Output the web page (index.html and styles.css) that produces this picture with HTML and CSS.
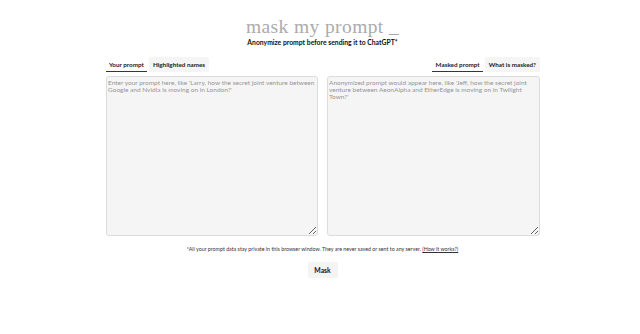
FILE: index.html
```html
<!DOCTYPE html>
<html lang="en">
<head>
<meta charset="utf-8">
<title>mask my prompt</title>
<link rel="stylesheet" href="styles.css">
</head>
<body>
<div class="page">
  <header class="head">
    <h1 class="title">mask my prompt _</h1>
    <p class="subtitle">Anonymize prompt before sending it to ChatGPT*</p>
  </header>
  <main class="panes">
    <section class="pane">
      <nav class="tabs">
        <span class="tab active">Your prompt</span>
        <span class="tab">Highlighted names</span>
      </nav>
      <textarea class="box" placeholder="Enter your prompt here, like 'Larry, how the secret joint venture between Google and Nvidia is moving on in London?'"></textarea>
    </section>
    <section class="pane">
      <nav class="tabs right">
        <span class="tab active">Masked prompt</span>
        <span class="tab">What is masked?</span>
      </nav>
      <textarea class="box" placeholder="Anonymized prompt would appear here, like 'Jeff, how the secret joint venture between AeonAlpha and EtherEdge is moving on in Twilight Town?'"></textarea>
    </section>
  </main>
  <p class="note">*All your prompt data stay private in this browser window. They are never saved or sent to any server. <a class="link" href="#">(How it works?)</a></p>
  <div class="actions"><button class="btn">Mask</button></div>
</div>
</body>
</html>
```
FILE: styles.css
```css
html, body {
  margin: 0;
  padding: 0;
  background: #fff;
}
body {
  font-family: Lato, "Open Sans", sans-serif;
  color: #222;
  padding-left: 5px;
}
.page {
  width: 434px;
  margin: 0 auto;
  display: flex;
  flex-direction: column;
}
.head {
  display: flex;
  flex-direction: column;
  align-items: center;
  padding-top: 16px;
}
.title {
  margin: 0;
  font-family: "Liberation Serif", serif;
  font-weight: 400;
  font-size: 19.5px;
  line-height: 22px;
  color: #ababab;
  letter-spacing: 0.4px;
}
.subtitle {
  margin: 0;
  font-size: 6.8px;
  font-weight: 700;
  line-height: 9px;
  color: #111;
}
.panes {
  margin-top: 10px;
  display: grid;
  grid-template-columns: 212px 213px;
  column-gap: 9px;
}
.pane {
  display: flex;
  flex-direction: column;
}
.tabs {
  display: flex;
  gap: 2px;
  height: 15px;
  margin-bottom: 4px;
}
.tabs.right {
  justify-content: flex-end;
}
.tab {
  display: flex;
  align-items: center;
  padding: 0 3.5px;
  font-size: 6.3px;
  font-weight: 700;
  color: #222;
  background: #f5f5f5;
  border-radius: 2px 2px 0 0;
  box-sizing: border-box;
}
.tab.active {
  background: #fff;
  border-bottom: 1.5px solid #2e2a8c;
  padding-top: 1px;
}
.box {
  height: 160px;
  box-sizing: border-box;
  margin: 0;
  padding: 2px 1.5px;
  border: 1px solid #dcdcdc;
  border-radius: 3px;
  background: #f5f5f5;
  font-family: Lato, "Open Sans", sans-serif;
  font-size: 6.5px;
  line-height: 7px;
  color: #222;
  resize: vertical;
}
.box::placeholder {
  color: #969696;
}
.note {
  margin: 9px 0 0;
  text-align: center;
  font-size: 5.3px;
  line-height: 8px;
  color: #333;
}
.link {
  color: #333;
  text-decoration: underline;
}
.actions {
  display: flex;
  justify-content: center;
  margin-top: 9px;
}
.btn {
  width: 30px;
  height: 16px;
  padding: 0;
  border: none;
  border-radius: 2px;
  background: #f4f4f4;
  font-family: Lato, "Open Sans", sans-serif;
  font-size: 6.8px;
  font-weight: 700;
  color: #111;
}
```
